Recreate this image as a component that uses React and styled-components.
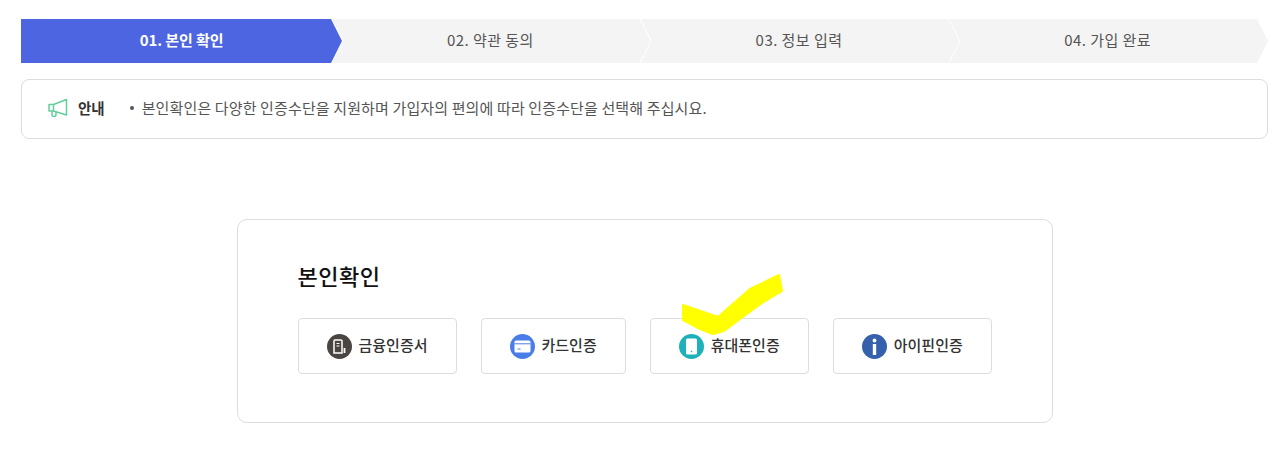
import React from 'react';
import styled, { createGlobalStyle } from 'styled-components';

const GlobalStyle = createGlobalStyle`
  html, body {
    margin: 0;
    padding: 0;
    background: #fff;
    overflow: hidden;
  }
  body {
    font-family: "Noto Sans CJK KR", "Noto Sans", sans-serif;
  }
`;

const Page = styled.div`
  position: relative;
  height: 463px;
  padding: 19px 12px 0 21px;
  box-sizing: border-box;
`;

const Steps = styled.ol`
  display: flex;
  margin: 0;
  padding: 0;
  list-style: none;
`;

const Step = styled.li`
  flex: 1 1 0;
  height: 44px;
  padding: 0 2px 3px 0;
  box-sizing: border-box;
  display: flex;
  align-items: center;
  justify-content: center;
  margin-left: -10px;
  font-size: 15px;
  letter-spacing: ${({ $active }) => ($active ? '-0.1px' : '0.45px')};
  color: ${({ $active }) => ($active ? '#fff' : '#555')};
  font-weight: ${({ $active }) => ($active ? 700 : 400)};
  background: ${({ $active }) => ($active ? '#4d65e0' : '#f4f4f4')};
  clip-path: polygon(0 0, calc(100% - 11px) 0, 100% 50%, calc(100% - 11px) 100%, 0 100%, 11px 50%);

  &:first-child {
    flex: 0 0 321px;
    padding-right: 0;
    margin-left: 0;
    clip-path: polygon(0 0, calc(100% - 11px) 0, 100% 50%, calc(100% - 11px) 100%, 0 100%);
  }
`;

const Notice = styled.div`
  display: flex;
  align-items: center;
  height: 60px;
  margin-top: 16px;
  padding: 0 0 3px 26px;
  box-sizing: border-box;
  border: 1px solid #ddd;
  border-radius: 8px;
`;

const NoticeLabel = styled.strong`
  margin-left: 10px;
  font-size: 14.5px;
  font-weight: 700;
  color: #333;
`;

const NoticeText = styled.p`
  display: flex;
  align-items: center;
  margin: 0 0 0 25px;
  font-size: 15px;
  letter-spacing: 0.13px;
  color: #555;

  &::before {
    content: '';
    width: 4px;
    height: 4px;
    margin-right: 8px;
    border-radius: 50%;
    background: #555;
  }
`;

const Card = styled.section`
  width: 816px;
  height: 204px;
  margin: 80px auto 0;
  padding: 39px 60px 0;
  box-sizing: border-box;
  border: 1px solid #ddd;
  border-radius: 10px;
`;

const CardTitle = styled.h2`
  margin: 0;
  font-size: 22px;
  letter-spacing: 0.5px;
  line-height: 32px;
  font-weight: 500;
  color: #111;
`;

const Methods = styled.div`
  display: flex;
  gap: 24px;
  margin-top: 27px;
`;

const Method = styled.button`
  display: inline-flex;
  flex: none;
  align-items: center;
  gap: 7px;
  height: 56px;
  padding: 0 28px;
  box-sizing: border-box;
  border: 1px solid #ddd;
  border-radius: 4px;
  background: #fff;
  font-family: inherit;
  font-size: 15px;
  font-weight: 500;
  color: #333;
  white-space: nowrap;
`;

const MethodLabel = styled.span`
  padding-bottom: 3px;
`;

const Check = styled.svg`
  position: absolute;
  left: 682px;
  top: 274px;
  width: 102px;
  height: 61px;
`;

const MegaphoneIcon = () => (
  <svg width="20" height="20" viewBox="0 0 20 20" fill="none" stroke="#62cf9b" strokeWidth="1.5" strokeLinejoin="round">
    <path d="M1 6.5h4.5L18.5 1.5v15.5L5.5 13H1z" />
    <path d="M5.5 6.5V13" />
    <path d="M4 13v3.5a2 2 0 0 0 4 0V13.8" />
  </svg>
);

const BankIcon = () => (
  <svg width="25" height="25" viewBox="0 0 25 25">
    <circle cx="12.5" cy="12.5" r="12.5" fill="#4a4543" />
    <path d="M7 7a1 1 0 0 1 1-1h6a1 1 0 0 1 1 1v12H7z" fill="none" stroke="#fff" strokeWidth="1.5" />
    <path d="M9.5 9.5h3M9.5 12h3" stroke="#fff" strokeWidth="1.2" />
    <path d="M17.5 14v5" stroke="#fff" strokeWidth="1.8" />
  </svg>
);

const CardIcon = () => (
  <svg width="25" height="25" viewBox="0 0 25 25">
    <circle cx="12.5" cy="12.5" r="12.5" fill="#4a7de8" />
    <rect x="4.5" y="6.5" width="16" height="12" rx="1.5" fill="#fff" />
    <path d="M4.5 9.8h16" stroke="#4a7de8" strokeWidth="1" />
    <path d="M7.5 15h3" stroke="#4a7de8" strokeWidth="1" />
  </svg>
);

const PhoneIcon = () => (
  <svg width="25" height="25" viewBox="0 0 25 25">
    <circle cx="12.5" cy="12.5" r="12.5" fill="#1fb1b9" />
    <rect x="7" y="4.5" width="11" height="16" rx="1.5" fill="#fff" />
    <circle cx="12.5" cy="17.5" r="0.8" fill="#1fb1b9" />
  </svg>
);

const InfoIcon = () => (
  <svg width="25" height="25" viewBox="0 0 25 25">
    <circle cx="12.5" cy="12.5" r="12.5" fill="#3560ac" />
    <circle cx="12.5" cy="6.5" r="1.9" fill="#fff" />
    <rect x="10.8" y="10" width="3.4" height="11" fill="#fff" />
  </svg>
);

const steps = ['01. 본인 확인', '02. 약관 동의', '03. 정보 입력', '04. 가입 완료'];

const methods = [
  { label: '금융인증서', Icon: BankIcon },
  { label: '카드인증', Icon: CardIcon },
  { label: '휴대폰인증', Icon: PhoneIcon },
  { label: '아이핀인증', Icon: InfoIcon },
];

export default function App() {
  return (
    <Page>
      <GlobalStyle />
      <Steps>
        {steps.map((step, i) => (
          <Step key={step} $active={i === 0}>{step}</Step>
        ))}
      </Steps>
      <Notice>
        <MegaphoneIcon />
        <NoticeLabel>안내</NoticeLabel>
        <NoticeText>본인확인은 다양한 인증수단을 지원하며 가입자의 편의에 따라 인증수단을 선택해 주십시요.</NoticeText>
      </Notice>
      <Card>
        <CardTitle>본인확인</CardTitle>
        <Methods>
          {methods.map(({ label, Icon }) => (
            <Method key={label}>
              <Icon />
              <MethodLabel>{label}</MethodLabel>
            </Method>
          ))}
        </Methods>
      </Card>
      <Check viewBox="0 0 102 61">
        <path
          d="M1 31 L36 43 L68 15 L97 1 L100 17 L80 29 L58 45 L42 57 L31 60 L18 55 L1 46 Z"
          fill="#ffff00"
          stroke="#ffff00"
          strokeWidth="2"
          strokeLinejoin="round"
        />
      </Check>
    </Page>
  );
}
